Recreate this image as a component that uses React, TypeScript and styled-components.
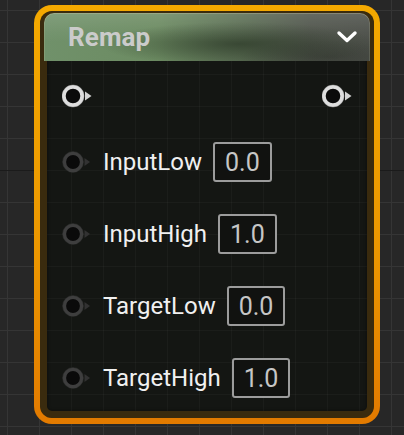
import React from "react";
import styled, { createGlobalStyle } from "styled-components";

const GlobalStyle = createGlobalStyle`
  html, body {
    margin: 0;
    padding: 0;
    min-height: 100vh;
  }
  body {
    background-color: #272727;
    background-image:
      linear-gradient(#1b1b1b, #1b1b1b),
      linear-gradient(90deg, #353535 1px, transparent 1px),
      linear-gradient(180deg, #353535 1px, transparent 1px);
    background-size: 100% 1px, 32px 32px, 32px 32px;
    background-position: 0 170px, 7px 0, 0 10px;
    background-repeat: no-repeat, repeat, repeat;
    font-family: Roboto, "Liberation Sans", sans-serif;
  }
`;

const Canvas = styled.div`
  padding: 5px 0 0 34px;
`;

const Frame = styled.div`
  width: 346px;
  height: 419px;
  box-sizing: border-box;
  padding: 6px;
  border-radius: 18px;
  background: linear-gradient(180deg, #f4a900 0%, #eb9600 60%, #e27a00 100%);
`;

const Inner = styled.div`
  height: 100%;
  box-sizing: border-box;
  padding: 2px 4px 0 4px;
  border-radius: 12px;
  background-color: #141613;
  background-image:
    linear-gradient(90deg, rgba(255, 255, 255, 0.03) 1px, transparent 1px),
    linear-gradient(180deg, rgba(255, 255, 255, 0.03) 1px, transparent 1px);
  background-size: 32px 32px, 32px 32px;
  background-position: 7px 0, 0 10px;
  background-attachment: fixed, fixed;
  box-shadow: inset 0 0 0 7px #3a2b0e, inset 0 0 3px 8px rgba(0, 0, 0, 0.3);
  display: flex;
  flex-direction: column;
`;

const Header = styled.div`
  height: 48px;
  flex: none;
  box-sizing: border-box;
  border-radius: 10px 10px 0 0;
  padding: 0 12px 0 24px;
  display: flex;
  align-items: center;
  justify-content: space-between;
  background:
    linear-gradient(180deg, rgba(255, 255, 255, 0.12) 0%, rgba(255, 255, 255, 0.03) 40%, rgba(0, 0, 0, 0) 60%),
    radial-gradient(ellipse 140px 22px at 195px 31px, rgba(36, 48, 32, 0.62), rgba(36, 48, 32, 0) 100%),
    radial-gradient(ellipse 90px 16px at 285px 44px, rgba(34, 38, 32, 0.4), rgba(34, 38, 32, 0) 100%),
    linear-gradient(90deg, #70916a 0%, #6c8b62 35%, #5a6c53 62%, #50554c 82%, #4d504a 100%);
  box-shadow: inset 0 1px 0 rgba(220, 210, 170, 0.3), inset 1px 0 0 rgba(200, 200, 160, 0.22),
    inset -1px 0 0 rgba(200, 200, 160, 0.18);
`;

const Title = styled.span`
  font-family: Roboto, "Liberation Sans", sans-serif;
  font-weight: 700;
  font-size: 26px;
  color: #cbcbcb;
  letter-spacing: 0.1px;
`;

const Chevron = styled.svg`
  width: 22px;
  height: 14px;
  display: block;
`;

const Body = styled.div`
  display: flex;
  flex-direction: column;
  padding: 15px 18px 0 18px;
`;

const ExecRow = styled.div`
  height: 40px;
  display: flex;
  align-items: center;
  justify-content: space-between;
  margin-bottom: 26px;
`;

const DataList = styled.div`
  display: flex;
  flex-direction: column;
  gap: 32px;
`;

const DataRow = styled.div`
  height: 40px;
  display: flex;
  align-items: center;
`;

const PinSvg = styled.svg`
  width: 30px;
  height: 24px;
  display: block;
  flex: none;
`;

const Label = styled.span`
  margin-left: 11px;
  font-size: 24px;
  color: #f0f0f0;
  white-space: nowrap;
`;

const ValueBox = styled.div`
  margin-left: 11px;
  height: 40px;
  box-sizing: border-box;
  padding: 0 10px;
  border: 2px solid #9c9c9c;
  border-radius: 3px;
  background: #111210;
  display: flex;
  align-items: center;
  font-size: 25px;
  color: #c6c6c6;
`;

const ExecPin: React.FC = () => (
  <PinSvg viewBox="0 0 30 24">
    <circle cx="11" cy="12" r="9.2" fill="#0b0b0b" stroke="#dedede" strokeWidth="3.8" />
    <circle cx="11" cy="12" r="11" fill="none" stroke="rgba(170,170,170,0.55)" strokeWidth="0.8" />
    <polygon points="23,7.5 29.5,12 23,16.5" fill="#d4d4d4" />
  </PinSvg>
);

const DataPin: React.FC = () => (
  <PinSvg viewBox="0 0 30 24">
    <circle cx="11" cy="12" r="8.6" fill="#0a0a0a" stroke="#3e3e3e" strokeWidth="3.4" />
    <circle cx="11" cy="12" r="10.4" fill="none" stroke="rgba(64,64,64,0.5)" strokeWidth="0.8" />
    <polygon points="22.5,8 28,12 22.5,16" fill="#323232" />
  </PinSvg>
);

const inputs = [
  { name: "InputLow", value: "0.0" },
  { name: "InputHigh", value: "1.0" },
  { name: "TargetLow", value: "0.0" },
  { name: "TargetHigh", value: "1.0" },
];

export default function App() {
  return (
    <>
      <GlobalStyle />
      <Canvas>
        <Frame>
          <Inner>
            <Header>
              <Title>Remap</Title>
              <Chevron viewBox="0 0 22 14">
                <polyline
                  points="3,3 11,10.5 19,3"
                  fill="none"
                  stroke="#ffffff"
                  strokeWidth="3.4"
                  strokeLinecap="round"
                  strokeLinejoin="round"
                />
              </Chevron>
            </Header>
            <Body>
              <ExecRow>
                <ExecPin />
                <ExecPin />
              </ExecRow>
              <DataList>
                {inputs.map((p) => (
                  <DataRow key={p.name}>
                    <DataPin />
                    <Label>{p.name}</Label>
                    <ValueBox>{p.value}</ValueBox>
                  </DataRow>
                ))}
              </DataList>
            </Body>
          </Inner>
        </Frame>
      </Canvas>
    </>
  );
}
